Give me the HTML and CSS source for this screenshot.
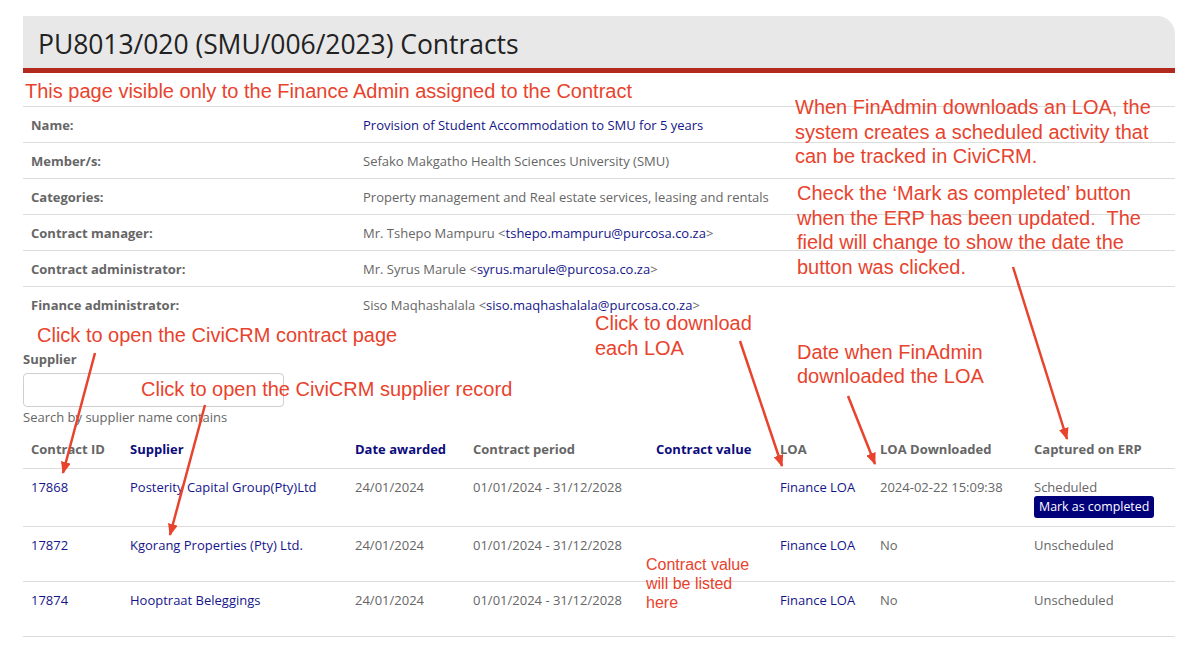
FILE: index.html
```html
<!DOCTYPE html>
<html>
<head>
<meta charset="utf-8">
<link rel="stylesheet" href="styles.css">
</head>
<body>
<div class="page">
  <div class="content">
    <div class="page-head"><h1>PU8013/020 (SMU/006/2023) Contracts</h1></div>
    <div class="note">This page visible only to the Finance Admin assigned to the Contract</div>
    <table class="details">
      <tr><td class="lbl">Name:</td><td><a>Provision of Student Accommodation to SMU for 5 years</a></td></tr>
      <tr><td class="lbl">Member/s:</td><td>Sefako Makgatho Health Sciences University (SMU)</td></tr>
      <tr><td class="lbl">Categories:</td><td>Property management and Real estate services, leasing and rentals</td></tr>
      <tr><td class="lbl">Contract manager:</td><td>Mr. Tshepo Mampuru &lt;<a>tshepo.mampuru@purcosa.co.za</a>&gt;</td></tr>
      <tr><td class="lbl">Contract administrator:</td><td>Mr. Syrus Marule &lt;<a>syrus.marule@purcosa.co.za</a>&gt;</td></tr>
      <tr><td class="lbl">Finance administrator:</td><td>Siso Maqhashalala &lt;<a>siso.maqhashalala@purcosa.co.za</a>&gt;</td></tr>
    </table>
    <div class="filter">
      <div class="filter-label">Supplier</div>
      <input class="filter-input" type="text">
      <div class="filter-help">Search by supplier name contains</div>
    </div>
    <table class="list">
      <colgroup>
        <col style="width:99px"><col style="width:225px"><col style="width:118px"><col style="width:183px">
        <col style="width:124px"><col style="width:100px"><col style="width:154px"><col style="width:149px">
      </colgroup>
      <thead>
        <tr>
          <th>Contract ID</th><th class="sort">Supplier</th><th class="sort">Date awarded</th><th>Contract period</th>
          <th class="sort">Contract value</th><th>LOA</th><th>LOA Downloaded</th><th>Captured on ERP</th>
        </tr>
      </thead>
      <tbody>
        <tr>
          <td><a>17868</a></td><td><a>Posterity Capital Group(Pty)Ltd</a></td><td>24/01/2024</td><td>01/01/2024 - 31/12/2028</td>
          <td></td><td><a>Finance LOA</a></td><td>2024-02-22 15:09:38</td>
          <td><div>Scheduled</div><button class="btn">Mark as completed</button></td>
        </tr>
        <tr>
          <td><a>17872</a></td><td><a>Kgorang Properties (Pty) Ltd.</a></td><td>24/01/2024</td><td>01/01/2024 - 31/12/2028</td>
          <td></td><td><a>Finance LOA</a></td><td>No</td><td>Unscheduled</td>
        </tr>
        <tr>
          <td><a>17874</a></td><td><a>Hooptraat Beleggings</a></td><td>24/01/2024</td><td>01/01/2024 - 31/12/2028</td>
          <td></td><td><a>Finance LOA</a></td><td>No</td><td>Unscheduled</td>
        </tr>
      </tbody>
    </table>
  </div>

  <div class="ann ann-when">When FinAdmin downloads an LOA, the<br>system creates a scheduled activity that<br>can be tracked in CiviCRM.</div>
  <div class="ann ann-check">Check the ‘Mark as completed’ button<br>when the ERP has been updated.&nbsp; The<br>field will change to show the date the<br>button was clicked.</div>
  <div class="ann ann-contract">Click to open the CiviCRM contract page</div>
  <div class="ann ann-download">Click to download<br>each LOA</div>
  <div class="ann ann-date">Date when FinAdmin<br>downloaded the LOA</div>
  <div class="ann ann-supplier">Click to open the CiviCRM supplier record</div>
  <div class="ann ann-value">Contract value<br>will be listed<br>here</div>

  <svg class="arrows" width="1200" height="647" viewBox="0 0 1200 647">
    <defs>
      <marker id="ah" viewBox="0 0 12 10" refX="11" refY="5" markerWidth="12" markerHeight="10" markerUnits="userSpaceOnUse" orient="auto">
        <path d="M0,0 L12,5 L0,10 z" fill="#e8432d"/>
      </marker>
    </defs>
    <g stroke="#e8432d" stroke-width="2.5" fill="none" marker-end="url(#ah)">
      <line x1="95" y1="353" x2="63" y2="473"/>
      <line x1="205" y1="405" x2="170" y2="535"/>
      <line x1="740" y1="341" x2="782" y2="466"/>
      <line x1="848" y1="396" x2="875" y2="464"/>
      <line x1="1013" y1="267" x2="1067" y2="439"/>
    </g>
  </svg>
</div>
</body>
</html>
```

FILE: styles.css
```css
html, body {
  margin: 0;
  padding: 0;
  background: #fff;
}

.page {
  position: relative;
  width: 1200px;
  height: 647px;
  overflow: hidden;
  font-family: "Open Sans", "Liberation Sans", sans-serif;
  font-size: 13px;
  color: #666;
}

.content {
  padding: 16px 25px 0 23px;
}

.page-head {
  background: #e8e8e8;
  border-top-right-radius: 18px;
  height: 52px;
  border-bottom: 5px solid #b22a1f;
  box-sizing: content-box;
  display: flex;
  align-items: center;
  padding-left: 15px;
}

.page-head h1 {
  margin: 0;
  padding-top: 3px;
  font-family: "Open Sans", sans-serif;
  font-weight: 400;
  font-size: 26.5px;
  color: #222;
  letter-spacing: -0.05px;
}

.note {
  font-family: "Liberation Sans", Arial, sans-serif;
  font-size: 20px;
  line-height: 22px;
  color: #e8432d;
  margin: 7px 0 4px 2px;
}

a {
  color: #15158a;
  text-decoration: none;
}

.details {
  width: 100%;
  border-collapse: collapse;
}

.details td {
  height: 35px;
  padding: 0 8px;
  border-top: 1px solid #dcdcdc;
  vertical-align: middle;
  line-height: 18px;
}

.details td.lbl {
  width: 316px;
  font-weight: 700;
  color: #666;
}

.filter {
  margin-top: 28px;
}

.filter-label {
  font-weight: 700;
  line-height: 18px;
  color: #666;
}

.filter-input {
  display: block;
  margin-top: 5px;
  width: 261px;
  height: 34px;
  box-sizing: border-box;
  border: 1px solid #cfcfcf;
  border-radius: 4px;
  background: #fff;
}

.filter-help {
  margin-top: 1px;
  line-height: 18px;
  color: #666;
}

.list {
  margin-top: 4px;
  width: 1152px;
  table-layout: fixed;
  border-collapse: collapse;
}

.list th {
  text-align: left;
  padding: 10px 8px;
  line-height: 18px;
  font-weight: 700;
  color: #666;
  border-bottom: 1px solid #dcdcdc;
  white-space: nowrap;
}

.list th.sort {
  color: #0c0c7c;
}

.list tbody tr {
  height: 55px;
}

.list td {
  padding: 9px 8px 8px;
  line-height: 18px;
  vertical-align: top;
  border-bottom: 1px solid #dcdcdc;
  white-space: nowrap;
}

.btn {
  display: inline-block;
  background: #00007a;
  color: #fff;
  border: none;
  border-radius: 3px;
  font-family: "Open Sans", sans-serif;
  font-size: 12.4px;
  line-height: 18px;
  padding: 2px 5px;
  margin: 0;
}

.ann {
  position: absolute;
  font-family: "Liberation Sans", Arial, sans-serif;
  font-size: 20px;
  line-height: 24.5px;
  color: #e8432d;
  white-space: nowrap;
}

.ann-when { left: 795px; top: 95px; }
.ann-check { left: 797px; top: 181px; }
.ann-contract { left: 37px; top: 323px; }
.ann-download { left: 595px; top: 311px; line-height: 25px; }
.ann-date { left: 797px; top: 341px; line-height: 23.5px; }
.ann-supplier { left: 141px; top: 377px; }
.ann-value { left: 646px; top: 555px; font-size: 16px; line-height: 19px; }

.arrows {
  position: absolute;
  left: 0;
  top: 0;
  pointer-events: none;
}
```
